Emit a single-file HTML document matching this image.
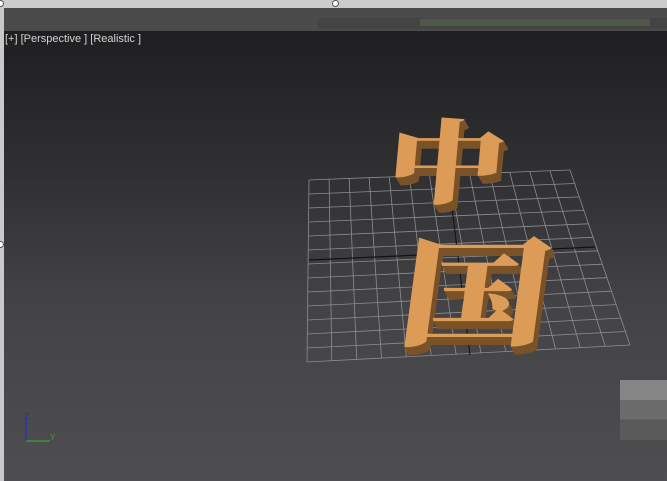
<!DOCTYPE html>
<html><head><meta charset="utf-8"><style>
body{margin:0;width:667px;height:481px;overflow:hidden;position:relative;background:#4d4c4f;font-family:"Liberation Sans",sans-serif}
#top{position:absolute;left:0;top:0;width:667px;height:8px;background:#cbcbcb}
#bar{position:absolute;left:0;top:8px;width:667px;height:23px;background:#4b4b4b}
#tool{position:absolute;left:318px;top:18px;width:349px;height:11px;background:#444444}
#tool2{position:absolute;left:420px;top:19px;width:230px;height:7px;background:#50584a}
#vp{position:absolute;left:4px;top:31px;width:663px;height:450px;background:linear-gradient(#1f1f21 0%,#2f2f31 30%,#444346 62%,#4e4d50 100%)}
#left{position:absolute;left:0;top:0;width:4px;height:481px;background:#c9c9c9}
#lbl{position:absolute;left:5px;top:33px;color:#d4d4d4;font-size:11px;white-space:pre}
.h{position:absolute;width:7px;height:7px;border-radius:50%;background:#fff;border:1px solid #555;box-sizing:border-box}
.cub{position:absolute}
</style></head><body>
<div id="top"></div><div id="bar"></div><div id="tool"></div><div id="tool2"></div>
<div id="vp"></div>
<div id="left"></div>
<div class="h" style="left:332px;top:0"></div>
<div class="h" style="left:-3px;top:0"></div>
<div class="h" style="left:-3px;top:241px"></div>
<div id="lbl">[+] [Perspective ] [Realistic ]</div>
<svg id="g" width="667" height="481" style="position:absolute;left:0;top:0"></svg>
<div class="cub" style="left:620px;top:380px;width:47px;height:60px;background:linear-gradient(#858585 0 33%,#6c6c6c 33% 66%,#5a5a5a 66%)"></div>
<script>
var s=document.getElementById('g'),h='';
var A=[309,180],B=[570,170],C=[630,345],D=[307,362],N=13;
function P(u,v){var x=(1-u)*(1-v)*A[0]+u*(1-v)*B[0]+u*v*C[0]+(1-u)*v*D[0];var y=(1-u)*(1-v)*A[1]+u*(1-v)*B[1]+u*v*C[1]+(1-u)*v*D[1];return x.toFixed(1)+','+y.toFixed(1)}
for(var i=0;i<=N;i++){var t=i/N;h+='<polyline fill="none" stroke="#8d8d92" stroke-width="0.8" points="'+P(t,0)+' '+P(t,1)+'"/>';h+='<polyline fill="none" stroke="#8d8d92" stroke-width="0.8" points="'+P(0,t)+' '+P(1,t)+'"/>';}
h+='<line x1="309" y1="260" x2="595" y2="247" stroke="#111" stroke-width="1.2"/><line x1="448" y1="175" x2="470" y2="355" stroke="#111" stroke-width="1"/>';
var txt='';
for(var k=8;k>=0;k--){var c=k?'#7a5228':'#dc9c58';
txt+='<text x="0" y="0" font-size="92" font-family="Noto Serif CJK SC,serif" font-weight="900" fill="'+c+'" transform="translate('+(384+k*0.6)+','+(196+k)+') scale(1.3,1) skewX(-4)">中</text>';
txt+='<text x="0" y="0" font-size="150" font-family="Noto Serif CJK SC,serif" font-weight="900" fill="'+c+'" transform="translate('+(395+k*0.5)+','+(336+k)+') scale(1,0.78) skewX(-6)">国</text>';}
h+=txt;
h+='<line x1="26" y1="441" x2="26" y2="419" stroke="#2530c0" stroke-width="1.2"/><line x1="26" y1="441" x2="50" y2="441" stroke="#3aa03a" stroke-width="1.2"/><text x="24" y="419" font-size="8" fill="#2a30b0">Z</text><text x="50" y="440" font-size="8" fill="#3aa03a">Y</text>';
s.innerHTML=h;
</script>
</body></html>
